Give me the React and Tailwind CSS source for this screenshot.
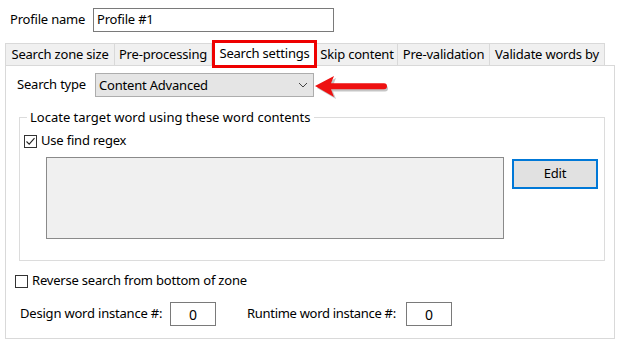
import React from "react";

const tabs = [
  { label: "Search zone size", w: "w-[110px] border-l" },
  { label: "Pre-processing", w: "w-[97px]" },
  { label: "Search settings", active: true },
  { label: "Skip content", w: "w-[81px]" },
  { label: "Pre-validation", w: "w-[92px]" },
  { label: "Validate words by", w: "w-[115px]" },
];

function CheckBox({ checked }) {
  return (
    <span className="flex h-[13px] w-[13px] items-center justify-center border border-[#333] bg-white">
      {checked && (
        <svg width="11" height="11" viewBox="0 0 11 11">
          <path d="M1.5 5.5 L4.2 8.2 L9.5 2.2" fill="none" stroke="#222" strokeWidth="1.1" />
        </svg>
      )}
    </span>
  );
}

function Arrow() {
  return (
    <svg className="absolute left-[310px] top-[72px]" width="84" height="32" viewBox="0 0 84 32">
      <path d="M7 16 L26 6 L23 13.5 L75 13.5 A3 3 0 0 1 75 19.5 L23 19.5 L26 27 Z" fill="#8c8c8c" opacity="0.5" />
      <path d="M5 14 L24 4 L21 11.2 L74 11.2 A3 3 0 0 1 74 17.2 L21 17.2 L24 25 Z" fill="#ee1111" />
    </svg>
  );
}

export default function App() {
  return (
    <div className="relative h-[346px] w-[623px] overflow-hidden bg-white text-[13px] tracking-[-0.2px] text-black" style={{ fontFamily: "'Noto Sans', sans-serif" }}>
      <div className="flex items-center pl-[10px] pt-[8px]">
        <span className="w-[83px]">Profile name</span>
        <div className="flex h-[24px] w-[241px] items-center border border-[#7a7a7a] px-[3px]">Profile #1</div>
      </div>

      <div className="ml-[5px] mt-[8px] flex items-end">
        {tabs.map((t) =>
          t.active ? (
            <div key={t.label} className="relative z-10 -mb-[3px] flex h-[28px] w-[105px] items-start justify-center border-[3px] border-[#ee0000] bg-white pt-[1px]">
              {t.label}
            </div>
          ) : (
            <div key={t.label} className={`flex h-[22px] items-center justify-center border-r border-t border-[#d9d9d9] bg-[#f0f0f0] pt-[1px] ${t.w}`}>
              {t.label}
            </div>
          )
        )}
      </div>

      <div className="ml-[5px] h-[274px] w-[610px] border border-[#d9d9d9] bg-white">
        <div className="flex items-center pl-[11px] pt-[7px]">
          <span className="w-[78px]">Search type</span>
          <div className="flex h-[24px] w-[219px] items-center justify-between border border-[#adadad] bg-[#e5e5e5] pl-[3px] pr-[5px]">
            <span className="pt-[1px]">Content Advanced</span>
            <svg width="10" height="6" viewBox="0 0 10 6">
              <path d="M1 1 L5 5 L9 1" fill="none" stroke="#444" strokeWidth="1" />
            </svg>
          </div>
        </div>

        <fieldset className="ml-[13px] mt-[12px] w-[586px] border border-[#dcdcdc] pb-[21px]">
          <legend className="ml-[7px] px-[3px] leading-[16px] tracking-normal">Locate target word using these word contents</legend>
          <div className="ml-[4px] mt-[8px] flex h-[16px] items-center gap-[4px]">
            <CheckBox checked />
            <span>Use find regex</span>
          </div>
          <div className="mt-[8px] flex items-start">
            <div className="ml-[26px] h-[82px] w-[458px] border border-[#8a8a8a] bg-[#f0f0f0]" />
            <button className="ml-[8px] mt-[2px] h-[30px] w-[86px] border-2 border-[#0078d7] bg-[#e1e1e1]">Edit</button>
          </div>
        </fieldset>

        <div className="ml-[9px] mt-[12px] flex h-[16px] items-center gap-[4px]">
          <CheckBox />
          <span>Reverse search from bottom of zone</span>
        </div>

        <div className="ml-[14px] mt-[13px] flex items-center">
          <span className="w-[150px]">Design word instance #:</span>
          <div className="flex h-[24px] w-[46px] items-center justify-center border border-[#7a7a7a] text-[14px]">0</div>
          <span className="ml-[31px] w-[159px] tracking-[-0.3px]">Runtime word instance #:</span>
          <div className="flex h-[24px] w-[46px] items-center justify-center border border-[#7a7a7a] text-[14px]">0</div>
        </div>
      </div>

      <Arrow />
    </div>
  );
}
